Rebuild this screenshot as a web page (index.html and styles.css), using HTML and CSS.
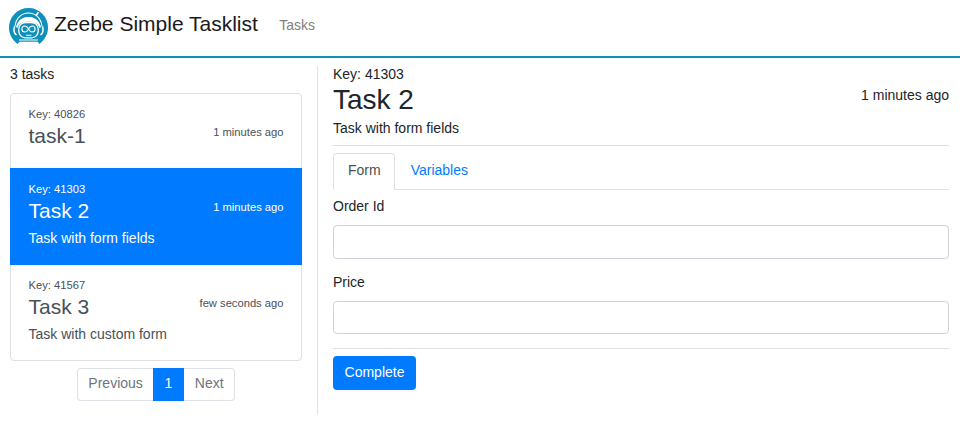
FILE: index.html
```html
<!DOCTYPE html>
<html lang="en">
<head>
<meta charset="utf-8">
<title>Zeebe Simple Tasklist</title>
<link rel="stylesheet" href="styles.css">
</head>
<body>
<header class="navbar">
  <svg class="logo" viewBox="0 0 39 37" aria-hidden="true">
    <path fill="#0f90bb" d="M8.500 36C3 31.500 0 26 0 19.500A19.500 19.500 0 0 1 39 19.500C39 26 36 31.500 30.500 36L28.500 33.800H10.500Z"/>
    <path fill="none" stroke="#fff" stroke-width="1.100" d="M6 18.500C7 9.500 13 5 19.500 5S32 9.500 33 18.500"/>
    <path fill="#fff" d="M7 19C9 11.500 14 9 19.500 9S30 11.500 32 19L30.500 20C29 15.500 26 13.800 19.500 13.800S10 15.500 8.500 20Z"/>
    <path stroke="#fff" stroke-width="1.700" stroke-linecap="round" d="M27.500 7L29 4.800"/>
    <path fill="none" stroke="#fff" stroke-width="1.500" d="M5.500 18.500c-1.200 4-.2 7 2 8.500M33.500 18.500c1.200 4 .2 7-2 8.500"/>
    <rect x="9.800" y="14.500" width="19.400" height="15.300" rx="6.500" fill="#0f90bb" stroke="#fff" stroke-width="1.300"/>
    <path fill="none" stroke="#fff" stroke-width="1.100" d="M19.500 21c-1-2-2-3-3.600-3a3 3 0 0 0 0 6c1.600 0 2.600-1 3.600-3s2-3 3.600-3a3 3 0 0 1 0 6c-1.600 0-2.600-1-3.600-3ZM17 27.200h5.500M10 32h19"/>
  </svg>
  <span class="brand">Zeebe Simple Tasklist</span>
  <a class="nav-link">Tasks</a>
</header>
<main class="page">
  <section class="sidebar">
    <div class="count">3 tasks</div>
    <div class="list">
      <article class="item">
        <small class="key">Key: 40826</small>
        <div class="row"><h4>task-1</h4><small>1 minutes ago</small></div>
      </article>
      <article class="item active">
        <small class="key">Key: 41303</small>
        <div class="row"><h4>Task 2</h4><small>1 minutes ago</small></div>
        <p>Task with form fields</p>
      </article>
      <article class="item last">
        <small class="key">Key: 41567</small>
        <div class="row"><h4>Task 3</h4><small>few seconds ago</small></div>
        <p>Task with custom form</p>
      </article>
    </div>
    <nav class="pagination"><a>Previous</a><a class="current">1</a><a>Next</a></nav>
  </section>
  <section class="detail">
    <div class="detail-key">Key: 41303</div>
    <div class="detail-head"><h2>Task 2</h2><span>1 minutes ago</span></div>
    <div class="description">Task with form fields</div>
    <nav class="tabs"><a class="tab selected">Form</a><a class="tab">Variables</a></nav>
    <form>
      <label for="order">Order Id</label>
      <input id="order" class="order" type="text">
      <label for="price">Price</label>
      <input id="price" class="price" type="text">
      <div class="actions"><button type="button">Complete</button></div>
    </form>
  </section>
</main>
</body>
</html>
```
FILE: styles.css
```css
* { box-sizing: border-box; }
body { margin: 0; background: #fff; color: #212529; font: 14px/21px "Liberation Sans", Arial, sans-serif; }
h2, h4, p { margin: 0; font-weight: 400; }
.navbar { display: flex; align-items: flex-start; height: 58px; padding: 8px 9px 0; border-bottom: 2px solid #0f90bb; }
.logo { width: 39px; height: 37px; }
.brand { margin-left: 6px; font-size: 21px; line-height: 32px; color: #1a1a1a; }
.nav-link { margin: 7px 0 0 21.3px; color: #808080; }
.page { display: flex; height: 357px; padding: 8px 11px 0 10px; }
.sidebar { width: 308px; padding-right: 15px; border-right: 1px solid #dee2e6; display: flex; flex-direction: column; }
.count { margin: -2px 0 8px; }
.list { border: 1px solid #dfdfdf; border-radius: 4px; color: #495057; }
.item { height: 74px; padding: 10px 17.5px 0; }
.item small { font-size: 11.2px; }
.key { display: block; line-height: 21px; }
.row { display: flex; justify-content: space-between; height: 28px; }
h4 { font-size: 21px; line-height: 21px; }
.row small { line-height: 15px; }
.active { height: 97px; margin: 0 -1px; padding: 11px 18.5px 0; background: #007bff; color: #fff; }
.last { height: 95px; }
.pagination { display: flex; align-self: center; margin-top: 7px; color: #6c757d; }
.pagination a { height: 33px; padding: 4px 10px; border: 1px solid #dee2e6; }
.pagination a:first-child { border-right: 0; border-radius: 4px 0 0 4px; }
.pagination a:last-child { border-left: 0; border-radius: 0 4px 4px 0; padding-left: 11px; }
.pagination .current { width: 31px; padding: 4px 0; text-align: center; border-color: #007bff; background: #007bff; color: #fff; }
.detail { flex: 1; padding-left: 15px; }
.detail-key { margin-top: -2px; }
.detail-head { display: flex; justify-content: space-between; height: 33px; }
h2 { font-size: 28px; line-height: 29px; }
.description { height: 28px; border-bottom: 1px solid #dfdfdf; }
.tabs { display: flex; height: 37px; margin-top: 7px; border-bottom: 1px solid #dee2e6; }
.tab { height: 37px; padding: 6px 15px 6px 14.7px; border: 1px solid transparent; color: #007bff; }
.selected { width: 62px; padding: 6px 13px 6px 14px; border-color: #dee2e6 #dee2e6 #fff; border-radius: 4px 4px 0 0; color: #495057; }
form { display: flex; flex-direction: column; }
label { margin-top: 6px; }
input { width: 100%; height: 34px; margin: 8px 0 7px; border: 1px solid #ced4da; border-radius: 4px; background: #fff; }
.price { height: 33px; margin-bottom: 14px; }
.actions { padding-top: 7px; border-top: 1px solid #dfdfdf; }
button { width: 83px; height: 34px; padding: 0 0 2px; border: 0; border-radius: 4px; background: #007bff; color: #fff; font: inherit; }
```
